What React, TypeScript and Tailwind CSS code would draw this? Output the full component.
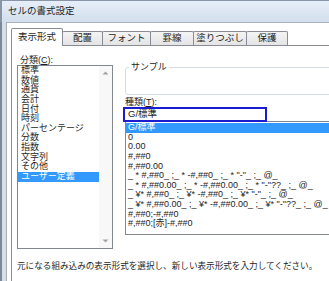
import React from "react";

const FONT = "font-['Liberation_Sans','Noto_Sans_CJK_JP',sans-serif]";

const tabs = [
  { label: "表示形式", w: "w-[52px]", active: true },
  { label: "配置", w: "w-[41px]" },
  { label: "フォント", w: "w-[49px]" },
  { label: "罫線", w: "w-[44px]" },
  { label: "塗りつぶし", w: "w-[54px]" },
  { label: "保護", w: "w-[42px]" },
];

const categories = [
  "標準",
  "数値",
  "通貨",
  "会計",
  "日付",
  "時刻",
  "パーセンテージ",
  "分数",
  "指数",
  "文字列",
  "その他",
  "ユーザー定義",
];

const formats = [
  "G/標準",
  "0",
  "0.00",
  "#,##0",
  "#,##0.00",
  '_ * #,##0_ ;_ * -#,##0_ ;_ * "-"_ ;_ @_ ',
  '_ * #,##0.00_ ;_ * -#,##0.00_ ;_ * "-"??_ ;_ @_ ',
  '_ ¥* #,##0_ ;_ ¥* -#,##0_ ;_ ¥* "-"_ ;_ @_ ',
  '_ ¥* #,##0.00_ ;_ ¥* -#,##0.00_ ;_ ¥* "-"??_ ;_ @_ ',
  "#,##0;-#,##0",
  "#,##0;[赤]-#,##0",
];

function Arrow({ up }: { up?: boolean }) {
  return (
    <svg width="7" height="4" viewBox="0 0 7 4" className="block">
      <path d={up ? "M0.5 3.5 L3.5 0.5 L6.5 3.5 Z" : "M0.5 0.5 L3.5 3.5 L6.5 0.5 Z"} fill="#a3a3a3" />
    </svg>
  );
}

export default function App() {
  return (
    <div className={`w-[329px] h-[281px] overflow-hidden bg-white text-[#1e1e1e] ${FONT}`}>
      {/* title bar */}
      <div className="h-[22px] flex items-center pl-[6px] border-t border-l-2 border-[#8795a6] bg-gradient-to-b from-[#e6eef8] to-[#d3dfee] text-[9.5px]">
        セルの書式設定
      </div>

      <div className="flex h-[259px]">
        {/* window frame */}
        <div className="w-[7px] h-full shrink-0 border-l-2 border-[#7b8898] bg-[#d6dfe9] border-r border-r-[#a3acb7]" />

        <div className="w-[322px] h-full border-t border-[#a9b2bd] pl-[4px]">
          {/* tabs */}
          <div className="h-[22px] flex items-end">
            {tabs.map((t, i) =>
              t.active ? (
                <div
                  key={t.label}
                  className={`${t.w} shrink-0 h-[18px] -mb-px relative z-10 bg-white border border-b-0 border-[#898c95] rounded-t-[2px] flex items-center justify-center text-[9.5px]`}
                >
                  {t.label}
                </div>
              ) : (
                <div
                  key={t.label}
                  className={`${t.w} shrink-0 h-[14px] ${i > 0 ? "-ml-px" : ""} bg-gradient-to-b from-[#f4f4f4] to-[#e4e4e4] border border-b-0 border-[#898c95] rounded-t-[2px] flex items-center justify-center text-[9.5px]`}
                >
                  {t.label}
                </div>
              )
            )}
          </div>

          {/* tab panel */}
          <div className="h-[237px] border-t border-l border-[#898c95] pl-[5px]">
            <div className="flex gap-[12px] items-start">
              {/* category column */}
              <div className="w-[96px] shrink-0">
                <div className="mt-[9px] h-[10px] leading-[10px] pl-[3px] text-[9px]">
                  分類(<span className="underline">C</span>):
                </div>
                <div className="h-[184px] border border-[#828790] flex">
                  <div className="flex-1 text-[9px]">
                    {categories.map((c) => (
                      <div
                        key={c}
                        className={`h-[9.65px] leading-[9.65px] pl-[3px] whitespace-nowrap ${
                          c === "ユーザー定義" ? "bg-[#3399ff] text-white" : ""
                        }`}
                      >
                        {c}
                      </div>
                    ))}
                  </div>
                  <div className="w-[13px] bg-[#f8f8f8] flex flex-col items-center justify-between py-[5px]">
                    <Arrow up />
                    <Arrow />
                  </div>
                </div>
              </div>

              {/* type column */}
              <div className="w-[220px] shrink-0">
                <fieldset className="mt-[16px] h-[33px] border border-[#d5dbe2] rounded-[3px]">
                  <legend className="ml-[3px] px-[2px] text-[9px] leading-[10px]">サンプル</legend>
                </fieldset>
                <div className="mt-[2px] h-[10px] leading-[10px] text-[9px]">
                  種類(<span className="underline">T</span>):
                </div>
                <div className="-ml-[2px] w-[144px] h-[15px] border-2 border-[#1c1ccf] bg-white relative z-10 -mb-px flex items-center pl-[3px] text-[9.5px]">
                  G/標準
                </div>
                <div className="h-[114px] border border-[#828790] pt-px text-[9px]">
                  {formats.map((f, i) => (
                    <div
                      key={f}
                      className={`h-[9.65px] leading-[9.65px] pl-[2px] whitespace-pre ${
                        i === 0 ? "bg-[#3399ff] text-white" : ""
                      }`}
                    >
                      {f}
                    </div>
                  ))}
                </div>
              </div>
            </div>

            <div className="mt-[12px] text-[8.6px] leading-[10px] whitespace-nowrap">
              元になる組み込みの表示形式を選択し、新しい表示形式を入力してください。
            </div>
          </div>
        </div>
      </div>
    </div>
  );
}
